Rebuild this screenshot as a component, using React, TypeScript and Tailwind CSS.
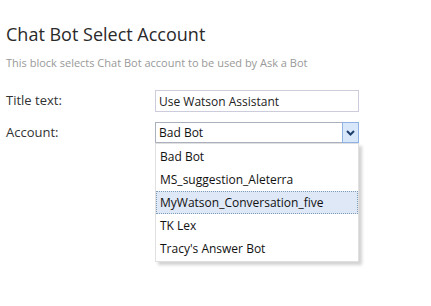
import React, { useState } from "react";

const accounts = [
  "Bad Bot",
  "MS_suggestion_Aleterra",
  "MyWatson_Conversation_five",
  "TK Lex",
  "Tracy's Answer Bot",
];

const App: React.FC = () => {
  const [titleText, setTitleText] = useState<string>("Use Watson Assistant");
  const [selected, setSelected] = useState<string>("Bad Bot");
  const [hovered, setHovered] = useState<number>(2);

  return (
    <div
      className="w-[431px] h-[306px] bg-white text-[#333] px-[6px] overflow-hidden"
      style={{ fontFamily: '"Open Sans", "Liberation Sans", sans-serif' }}
    >
      <h2 className="mt-[22px] text-[18px] leading-[24px] text-[#2a2a2a]">
        Chat Bot Select Account
      </h2>
      <p className="mt-[9px] text-[11px] leading-[15px] text-[#999]">
        This block selects Chat Bot account to be used by Ask a Bot
      </p>

      <div className="mt-[20px] flex items-center">
        <label className="w-[149px] text-[13px] text-[#333]">Title text:</label>
        <input
          value={titleText}
          onChange={(e) => setTitleText(e.target.value)}
          className="w-[204px] h-[22px] px-[3px] border border-[#ccccdd] text-[12px] text-[#222] outline-none"
        />
      </div>

      <div className="mt-[10px] flex items-start">
        <label className="w-[149px] h-[21px] flex items-center text-[13px] text-[#333]">
          Account:
        </label>
        <div className="relative w-[204px]">
          <div className="h-[21px] flex border border-[#aab0be]">
            <div className="flex-1 px-[3px] flex items-center text-[12px] text-[#111]">
              {selected}
            </div>
            <div className="w-[17px] -my-px -mr-px flex items-center justify-center bg-[#d8e8fa] border border-[#8db2e3]">
              <svg width="9" height="6" viewBox="0 0 9 6">
                <path d="M1 1 L4.5 4.5 L8 1" stroke="#1e3f6e" strokeWidth="2" fill="none" />
              </svg>
            </div>
          </div>
          <ul className="absolute left-0 top-[21px] w-[204px] bg-white border border-[#e0e0e0] shadow-[3px_3px_3px_rgba(0,0,0,0.18)] py-px">
            {accounts.map((name, idx) => (
              <li
                key={name}
                onMouseEnter={() => setHovered(idx)}
                onClick={() => setSelected(name)}
                className={`h-[23px] px-[3px] flex items-center text-[12px] text-[#111] cursor-default ${
                  hovered === idx
                    ? "bg-[#dfe8f6] border border-dotted border-[#7f9db9]"
                    : "border border-transparent"
                }`}
              >
                {name}
              </li>
            ))}
          </ul>
        </div>
      </div>
    </div>
  );
};

export default App;
